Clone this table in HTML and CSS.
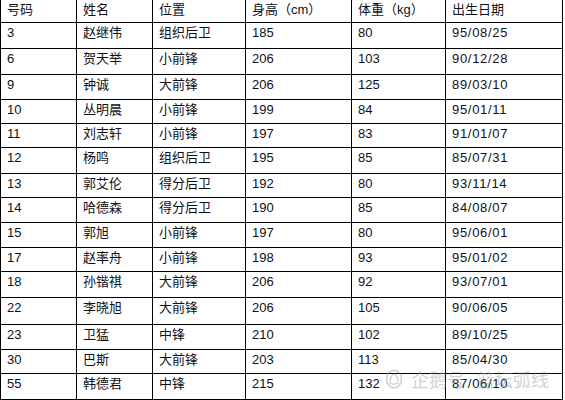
FILE: index.html
```html
<!DOCTYPE html>
<html lang="zh-CN">
<head>
<meta charset="utf-8">
<title>球员名单</title>
<link rel="stylesheet" href="styles.css">
</head>
<body>
<div class="sheet">
  <table class="roster">
    <colgroup>
      <col class="c-num"><col class="c-name"><col class="c-pos"><col class="c-h"><col class="c-w"><col class="c-d">
    </colgroup>
    <thead>
      <tr><th>号码</th><th>姓名</th><th>位置</th><th>身高（cm）</th><th>体重（kg）</th><th>出生日期</th></tr>
    </thead>
    <tbody>
      <tr><td>3</td><td>赵继伟</td><td>组织后卫</td><td>185</td><td>80</td><td class="date">95/08/25</td></tr>
      <tr><td>6</td><td>贺天举</td><td>小前锋</td><td>206</td><td>103</td><td class="date">90/12/28</td></tr>
      <tr><td>9</td><td>钟诚</td><td>大前锋</td><td>206</td><td>125</td><td class="date">89/03/10</td></tr>
      <tr><td>10</td><td>丛明晨</td><td>小前锋</td><td>199</td><td>84</td><td class="date">95/01/11</td></tr>
      <tr><td>11</td><td>刘志轩</td><td>小前锋</td><td>197</td><td>83</td><td class="date">91/01/07</td></tr>
      <tr><td>12</td><td>杨鸣</td><td>组织后卫</td><td>195</td><td>85</td><td class="date">85/07/31</td></tr>
      <tr><td>13</td><td>郭艾伦</td><td>得分后卫</td><td>192</td><td>80</td><td class="date">93/11/14</td></tr>
      <tr><td>14</td><td>哈德森</td><td>得分后卫</td><td>190</td><td>85</td><td class="date">84/08/07</td></tr>
      <tr><td>15</td><td>郭旭</td><td>小前锋</td><td>197</td><td>80</td><td class="date">95/06/01</td></tr>
      <tr><td>17</td><td>赵率舟</td><td>小前锋</td><td>198</td><td>93</td><td class="date">95/01/02</td></tr>
      <tr><td>18</td><td>孙锴祺</td><td>大前锋</td><td>206</td><td>92</td><td class="date">93/07/01</td></tr>
      <tr><td>22</td><td>李晓旭</td><td>大前锋</td><td>206</td><td>105</td><td class="date">90/06/05</td></tr>
      <tr><td>23</td><td>卫猛</td><td>中锋</td><td>210</td><td>102</td><td class="date">89/10/25</td></tr>
      <tr><td>30</td><td>巴斯</td><td>大前锋</td><td>203</td><td>113</td><td class="date">85/04/30</td></tr>
      <tr><td>55</td><td>韩德君</td><td>中锋</td><td>215</td><td>132</td><td class="date">87/06/10</td></tr>
    </tbody>
  </table>
  <div class="watermark">
    <svg class="wm-logo" width="18" height="20" viewBox="0 0 18 20" aria-hidden="true">
      <ellipse cx="9" cy="10" rx="7.5" ry="8.8" fill="none" stroke="currentColor" stroke-width="1.6"/>
      <path d="M5 14 C5 9 7 5 9 5 C11 5 13 9 13 14 C11 15.5 7 15.5 5 14 Z" fill="none" stroke="currentColor" stroke-width="1.4"/>
    </svg>
    <span class="wm-text">企鹅号</span>
    <span class="wm-text wm-name">篮坛弧线</span>
  </div>
</div>
</body>
</html>
```
FILE: styles.css
```css
html, body {
  margin: 0;
  padding: 0;
  background: #fff;
}
.sheet {
  position: relative;
  width: 565px;
  height: 400px;
  overflow: hidden;
}
.roster {
  border-collapse: collapse;
  table-layout: fixed;
  width: 562px;
  margin-top: -1px;
  font-family: "Liberation Sans", "Noto Sans CJK SC", sans-serif;
  font-size: 13px;
  color: #101018;
}
.c-num { width: 76px; }
.c-name { width: 76px; }
.c-pos { width: 93px; }
.c-h { width: 106px; }
.c-w { width: 94px; }
.c-d { width: 117px; }
.roster th,
.roster td {
  border: 1px solid #000;
  padding: 2px 6px 0;
  text-align: left;
  vertical-align: top;
  font-weight: normal;
  line-height: 16px;
  white-space: nowrap;
}
.roster thead tr { height: 23px; }
.roster tbody tr { height: 25px; }
.roster tbody tr:nth-child(1),
.roster tbody tr:nth-child(2),
.roster tbody tr:nth-child(6),
.roster tbody tr:nth-child(11),
.roster tbody tr:nth-child(15) { height: 26px; }
.roster tbody tr:nth-child(4),
.roster tbody tr:nth-child(5),
.roster tbody tr:nth-child(7),
.roster tbody tr:nth-child(10),
.roster tbody tr:nth-child(14) { height: 24px; }
.roster tbody tr:nth-child(12) { height: 27px; }
.roster td.date { letter-spacing: 0.7px; }
.watermark {
  position: absolute;
  left: 385px;
  top: 368px;
  display: flex;
  align-items: center;
  gap: 8px;
  color: rgba(150, 150, 150, 0.45);
  font-family: "Noto Sans CJK SC", sans-serif;
  font-size: 18px;
  line-height: 22px;
}
.wm-logo { flex: none; }
.wm-name { margin-left: 4px; }
```
